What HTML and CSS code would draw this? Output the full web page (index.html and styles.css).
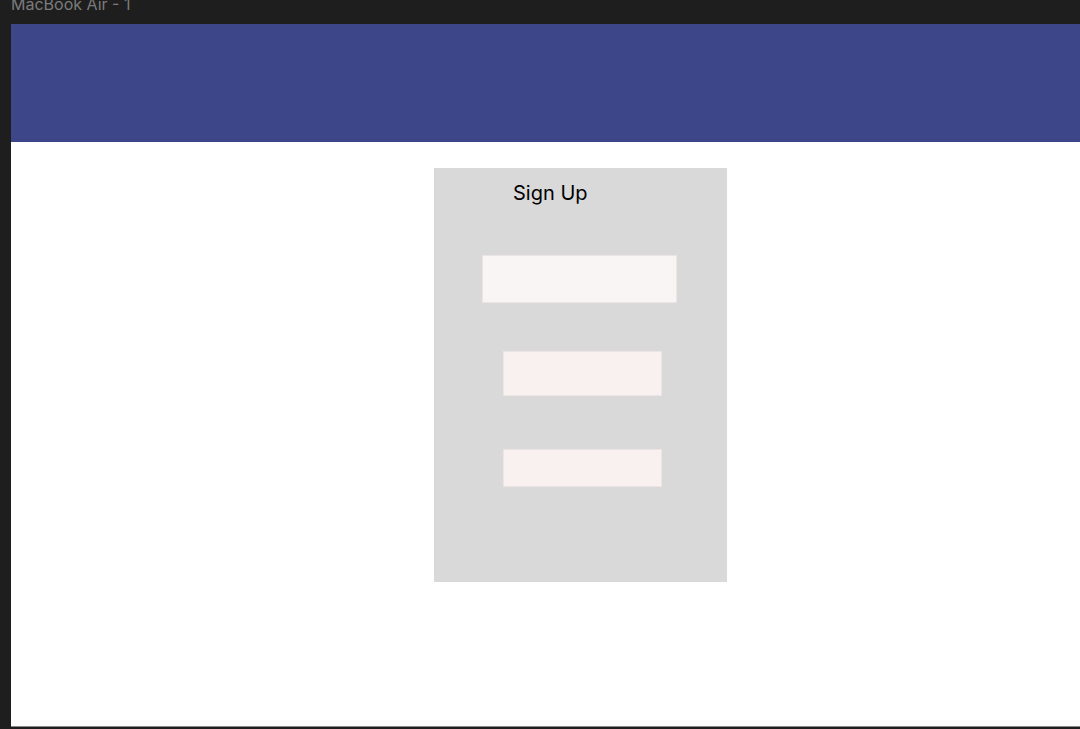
FILE: index.html
```html
<!DOCTYPE html>
<html lang="en">
<head>
<meta charset="utf-8">
<title>MacBook Air - 1</title>
<link rel="stylesheet" href="styles.css">
</head>
<body>
  <div class="frame-label">MacBook Air - 1</div>
  <div class="frame">
    <header class="topbar"></header>
    <main class="content">
      <section class="card">
        <h1 class="card-title">Sign Up</h1>
        <div class="field field-wide"></div>
        <div class="field field-mid"></div>
        <div class="field field-short"></div>
      </section>
    </main>
  </div>
</body>
</html>
```

FILE: styles.css
```css
html, body {
  margin: 0;
  padding: 0;
}
body {
  background: #1e1e1e;
  font-family: Inter, "Noto Sans", "Liberation Sans", sans-serif;
  width: 1080px;
  height: 729px;
  overflow: hidden;
}
.frame-label {
  height: 24px;
  padding-left: 11px;
  font-size: 16px;
  line-height: 8px;
  color: #7b7b7b;
  white-space: nowrap;
}
.frame {
  margin-left: 11px;
  width: 1069px;
  height: 702px;
  background: #ffffff;
  border-bottom: 1px solid #8a8a8a;
  display: flex;
  flex-direction: column;
}
.topbar {
  height: 118px;
  background: #3d4688;
  flex: none;
}
.content {
  padding-top: 26px;
  padding-left: 423px;
}
.card {
  width: 293px;
  height: 414px;
  background: #d9d9d9;
  box-sizing: border-box;
  display: flex;
  flex-direction: column;
}
.card-title {
  margin: 0;
  padding-top: 13px;
  padding-left: 79px;
  font-size: 20px;
  font-weight: 400;
  line-height: 24px;
  color: #000000;
}
.field {
  box-sizing: border-box;
  border: 1px solid #ebe5e5;
}
.field-wide {
  margin-top: 50px;
  margin-left: 48px;
  width: 195px;
  height: 48px;
  background: #faf5f5;
}
.field-mid {
  margin-top: 48px;
  margin-left: 69px;
  width: 159px;
  height: 45px;
  background: #f9f0f0;
}
.field-short {
  margin-top: 53px;
  margin-left: 69px;
  width: 159px;
  height: 38px;
  background: #f9f0f0;
}
```
